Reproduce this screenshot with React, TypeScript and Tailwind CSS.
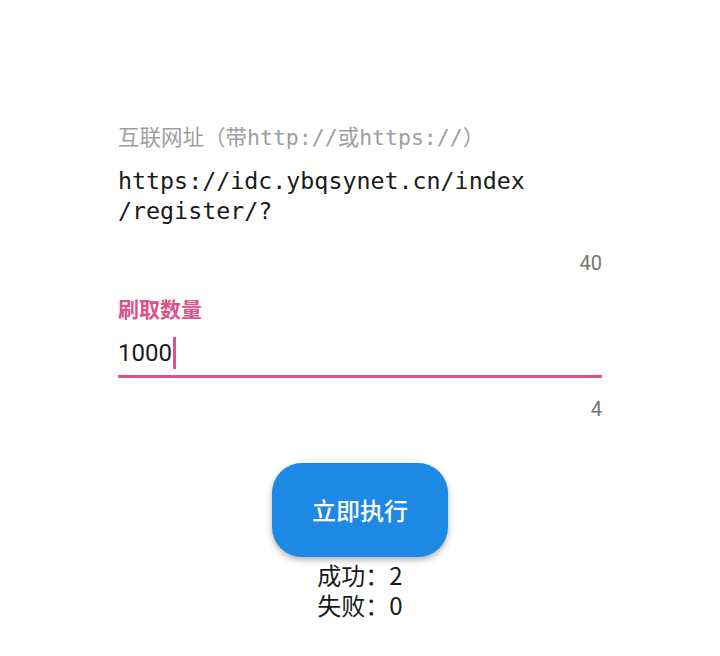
export default function App() {
  return (
    <div className="w-[720px] h-[656px] bg-white flex flex-col font-['Roboto','Noto_Sans_CJK_SC',sans-serif]">
      <div className="px-[118px] pt-[121px] flex flex-col">
        <div className="text-[21.5px] leading-[30px] text-[#9e9e9e] font-['Noto_Sans_CJK_SC',sans-serif]">
          互联网址（带<span className="font-['DejaVu_Sans_Mono',monospace]">http://</span>或<span className="font-['DejaVu_Sans_Mono',monospace]">https://</span>）
        </div>
        <div className="mt-[13px] text-[23.3px] leading-[30px] text-[#1a1a1a] font-['DejaVu_Sans_Mono',monospace]">
          https://idc.ybqsynet.cn/index
          <br />
          /register/?
        </div>
        <div className="mt-[24px] text-right text-[20px] leading-[26px] text-[#757575]">40</div>
        <div className="mt-[17px] text-[21px] leading-[30px] font-bold text-[#e0508a] font-['Noto_Sans_CJK_SC',sans-serif]">刷取数量</div>
        <div className="mt-[13px] flex items-center h-[34px] text-[24px] text-[#1a1a1a]">
          <span>1000</span>
          <span className="w-[3px] h-[32px] bg-[#e0508a] ml-[1px]" />
        </div>
        <div className="mt-[5px] h-[3px] bg-[#e0508a]" />
        <div className="mt-[18px] text-right text-[20px] leading-[26px] text-[#757575]">4</div>
      </div>
      <div className="flex flex-col items-center mt-[41px] font-['Noto_Sans_CJK_SC',sans-serif]">
        <button className="w-[176px] h-[94px] rounded-[30px] bg-[#1e88e5] text-white text-[24px] font-medium shadow-[0_3px_6px_rgba(0,0,0,0.3)]">立即执行</button>
        <div className="text-[24px] leading-[30px] text-[#1a1a1a] mt-[3px]">成功：2</div>
        <div className="text-[24px] leading-[30px] text-[#1a1a1a]">失败：0</div>
      </div>
    </div>
  );
}
